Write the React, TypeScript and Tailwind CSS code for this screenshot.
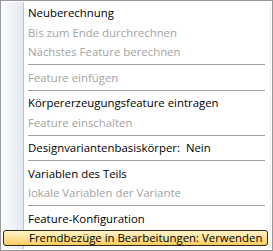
import React from 'react';

type Entry =
    | { kind: 'item'; label: string; disabled?: boolean; active?: boolean }
    | { kind: 'sep' };

const ENTRIES: Entry[] = [
    { kind: 'item', label: 'Neuberechnung' },
    { kind: 'item', label: 'Bis zum Ende durchrechnen', disabled: true },
    { kind: 'item', label: 'Nächstes Feature berechnen', disabled: true },
    { kind: 'sep' },
    { kind: 'item', label: 'Feature einfügen', disabled: true },
    { kind: 'sep' },
    { kind: 'item', label: 'Körpererzeugungsfeature eintragen' },
    { kind: 'item', label: 'Feature einschalten', disabled: true },
    { kind: 'sep' },
    { kind: 'item', label: 'Designvariantenbasiskörper:  Nein' },
    { kind: 'sep' },
    { kind: 'item', label: 'Variablen des Teils' },
    { kind: 'item', label: 'lokale Variablen der Variante', disabled: true },
    { kind: 'sep' },
    { kind: 'item', label: 'Feature-Konfiguration' },
    { kind: 'item', label: 'Fremdbezüge in Bearbeitungen: Verwenden', active: true },
];

const MenuItem: React.FC<{ label: string; disabled?: boolean; active?: boolean }> = ({ label, disabled, active }) => {
    if (active) {
        return (
            <div className="h-[19.5px] pt-[2px] pb-[1.5px] pl-[1px] pr-[2px]">
                <div className="h-full flex items-center pl-[25px] rounded-[3px] border border-[#2e2a20] bg-gradient-to-b from-[#fff3c6] via-[#fde29a] to-[#f8cc5a]">
                    <span className="whitespace-pre text-black">{label}</span>
                </div>
            </div>
        );
    }
    return (
        <div className="h-[19.5px] flex items-center pl-[26px]">
            <span className={`whitespace-pre ${disabled ? 'text-[#a3a3a3]' : 'text-black'}`}>{label}</span>
        </div>
    );
};

export default function App() {
    return (
        <div className="w-[273px] h-[251px] bg-white border border-[#979797] p-[1px] font-['Open_Sans',sans-serif] text-[11.4px] leading-none">
            <div className="relative h-full border-r border-[#eeeeee] pt-[1px]">
                {/* left icon strip */}
                <div className="absolute left-0 top-0 bottom-0 w-[22px] bg-gradient-to-r from-[#fbfcfd] to-[#e4e9f1] border-r border-[#c5c5c5]" />
                <div className="absolute left-[22px] top-0 bottom-0 w-[1px] bg-white" />
                <div className="relative">
                    {ENTRIES.map((e, i) =>
                        e.kind === 'sep' ? (
                            <div key={i} className="h-[6px] flex items-center pl-[26px] pr-[5px]">
                                <div className="w-full h-[1px] bg-[#a0a0a0]" />
                            </div>
                        ) : (
                            <MenuItem key={i} label={e.label} disabled={e.disabled} active={e.active} />
                        )
                    )}
                </div>
            </div>
        </div>
    );
}
